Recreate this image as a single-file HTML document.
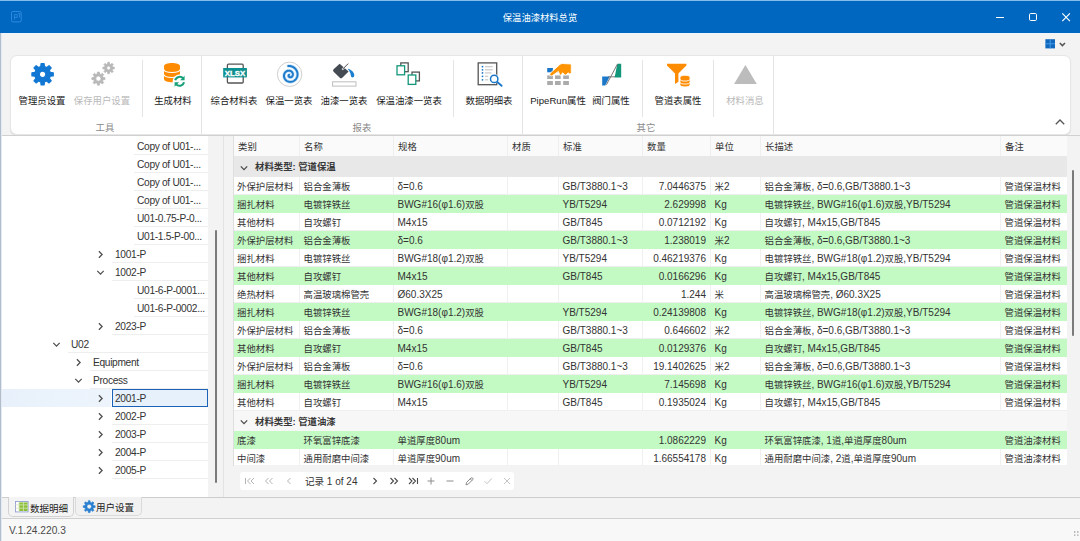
<!DOCTYPE html>
<html lang="zh-CN">
<head>
<meta charset="utf-8">
<title>保温油漆材料总览</title>
<style>
*{box-sizing:border-box;margin:0;padding:0}
html,body{width:1080px;height:541px;overflow:hidden;background:#f3f3f3}
body{position:relative;font-family:"Liberation Sans","Noto Sans CJK SC",sans-serif;font-size:9.4px;color:#333}
.abs,.abs *{position:absolute}
.abs span{position:static}
#title{left:0;top:0;width:1080px;height:33px;background:#0067c0;border-top:1px solid #86bcec}
#title .cap{left:0;width:1080px;top:10px;text-align:center;color:#fff;font-size:9.3px;line-height:14px}
#ribbon{left:10px;top:55px;width:1061px;height:80px;background:#fff;border:1px solid #e6e6e6;border-radius:7px;box-shadow:0 1px 1px rgba(0,0,0,.10)}
.gsep{top:0;width:1px;height:78px;background:#e4e4e4}
.isep{top:4px;width:1px;height:57px;background:#e4e4e4}
.lbl{top:38px;width:120px;margin-left:-60px;text-align:center;font-size:9.4px;line-height:14px;color:#1a1a1a;white-space:nowrap}
.lbl.dis{color:#b9b9b9}
.lbl .l{font-size:9.6px}
.ico{top:5px;width:28px;height:28px;margin-left:-14px}
.glbl{top:65px;font-size:9.4px;line-height:14px;color:#8a8a8a;text-align:center;width:40px;margin-left:-20px}
#tree{left:2px;top:136px;width:206px;height:361px;background:#fff;overflow:hidden}
.tn{height:18px;line-height:20px;font-size:10.2px;letter-spacing:-0.32px;color:#333;border-bottom:1px solid #eeeeee;padding-left:3px;white-space:nowrap;right:0}
.tn.sel{border:1px solid #1a62b8;background:#e6f1fb;line-height:18px;padding-left:2px}
.band{left:0;height:18px;background:linear-gradient(90deg,#e8f1fb,#edf4fc)}
#grid{left:233px;top:136px;width:834px;height:329px;background:#f3f3f3;overflow:hidden}
.hdr{top:0;left:0;width:834px;height:20px;background:#fafafa}
.hc{top:0;height:20px;line-height:22px;padding-left:4px;border-left:1px solid #efefef;color:#333}
.grp{left:0;width:834px;height:21px;background:#e8e8e8;line-height:22px;font-weight:bold;color:#383838;padding-left:22px}
.row{left:0;width:834px;height:18px;background:#fff;border-bottom:1px solid #efefef}
.row.g{background:#c3fac3;border-bottom-color:#c3fac3}
.c{top:0;height:18px;line-height:19px;padding-left:3.5px;white-space:nowrap;overflow:hidden;border-left:1px solid #f0f0f0}
.row.g .c{border-left-color:#c3fac3}
.c.r{text-align:right;padding-right:4px;padding-left:0}
.l{font-size:10px}
</style>
</head>
<body>
<div id="title" class="abs"><div class="cap">保温油漆材料总览</div>
<svg style="left:9.6px;top:9.3px" width="14" height="14" viewBox="0 0 14 14"><rect x="1.5" y="1.5" width="9.7" height="10.4" rx="1.4" fill="none" stroke="#2e8ae0" stroke-width="1"/><path d="M4.4 9.6 V4.6 H7.2 M8 3.4 H9.6 V7.6 M4.4 7.4 H7.2 V4.6" stroke="#2e8ae0" fill="none" stroke-width="0.9"/></svg>
<svg style="left:994px;top:9px" width="80" height="14" viewBox="0 0 80 14"><path d="M2 7.5 H10" stroke="#fff" stroke-width="1"/><rect x="35.5" y="3.5" width="7" height="7" rx="1.2" fill="none" stroke="#fff" stroke-width="1"/><path d="M68.3 3.4 L75.9 11.2 M75.9 3.4 L68.3 11.2" stroke="#fff" stroke-width="1.15"/></svg>
</div>
<svg class="abs" style="left:1045px;top:38px" width="26" height="12" viewBox="0 0 26 12"><rect x="0.4" y="1.2" width="9.6" height="9.2" fill="#0f67be"/><path d="M5.2 1.2 V10.4 M0.4 5.8 H10" stroke="#4aa0ea" stroke-width="0.9"/><path d="M14.8 5 L17.4 7.6 L20 5" stroke="#555" fill="none" stroke-width="1.5"/></svg>
<div id="ribbon" class="abs">
<div class="gsep" style="left:190px"></div>
<div class="gsep" style="left:511px"></div>
<div class="gsep" style="left:762px"></div>
<div class="isep" style="left:131px"></div>
<div class="isep" style="left:442px"></div>
<div class="isep" style="left:631px"></div>
<div class="isep" style="left:702px"></div>
<div class="ico" style="left:31px"><svg width="28" height="28" viewBox="0 0 28 28"><path fill-rule="evenodd" fill="#1177d3" stroke="#1177d3" stroke-width="1.2" stroke-linejoin="round" d="M22.28 11.46 L25.29 11.78 L25.29 14.82 L22.28 15.14 L21.34 17.43 L23.24 19.78 L21.08 21.94 L18.73 20.04 L16.44 20.98 L16.12 23.99 L13.08 23.99 L12.76 20.98 L10.47 20.04 L8.12 21.94 L5.96 19.78 L7.86 17.43 L6.92 15.14 L3.91 14.82 L3.91 11.78 L6.92 11.46 L7.86 9.17 L5.96 6.82 L8.12 4.66 L10.47 6.56 L12.76 5.62 L13.08 2.61 L16.12 2.61 L16.44 5.62 L18.73 6.56 L21.08 4.66 L23.24 6.82 L21.34 9.17 Z M11.40 13.30 a3.20 3.20 0 1 0 6.40 0 a3.20 3.20 0 1 0 -6.40 0 Z"/></svg></div>
<div class="lbl" style="left:31px">管理员设置</div>
<div class="ico" style="left:91px"><svg width="28" height="28" viewBox="0 0 28 28"><path fill-rule="evenodd" fill="#b8b8b8" stroke="#b8b8b8" stroke-width="0.8" stroke-linejoin="round" d="M24.59 6.04 L26.34 6.18 L26.34 7.82 L24.59 7.96 L24.10 9.14 L25.24 10.48 L24.08 11.64 L22.74 10.50 L21.56 10.99 L21.42 12.74 L19.78 12.74 L19.64 10.99 L18.46 10.50 L17.12 11.64 L15.96 10.48 L17.10 9.14 L16.61 7.96 L14.86 7.82 L14.86 6.18 L16.61 6.04 L17.10 4.86 L15.96 3.52 L17.12 2.36 L18.46 3.50 L19.64 3.01 L19.78 1.26 L21.42 1.26 L21.56 3.01 L22.74 3.50 L24.08 2.36 L25.24 3.52 L24.10 4.86 Z M18.70 7.00 a1.90 1.90 0 1 0 3.80 0 a1.90 1.90 0 1 0 -3.80 0 Z"/><path fill-rule="evenodd" fill="#b8b8b8" stroke="#b8b8b8" stroke-width="0.8" stroke-linejoin="round" d="M15.07 16.48 L16.93 16.67 L16.93 18.53 L15.07 18.72 L14.49 20.11 L15.68 21.56 L14.36 22.88 L12.91 21.69 L11.52 22.27 L11.33 24.13 L9.47 24.13 L9.28 22.27 L7.89 21.69 L6.44 22.88 L5.12 21.56 L6.31 20.11 L5.73 18.72 L3.87 18.53 L3.87 16.67 L5.73 16.48 L6.31 15.09 L5.12 13.64 L6.44 12.32 L7.89 13.51 L9.28 12.93 L9.47 11.07 L11.33 11.07 L11.52 12.93 L12.91 13.51 L14.36 12.32 L15.68 13.64 L14.49 15.09 Z M7.80 17.60 a2.60 2.60 0 1 0 5.20 0 a2.60 2.60 0 1 0 -5.20 0 Z"/></svg></div>
<div class="lbl dis" style="left:91px">保存用户设置</div>
<div class="ico" style="left:162px"><svg width="28" height="28" viewBox="0 0 28 28"><path fill="#ff8c00" d="M5 5.2 C5 0.8 21 0.8 21 5.2 V18 C21 22.4 5 22.4 5 18 Z"/><path fill="none" stroke="#fff" stroke-width="1.1" d="M5 8.6 C5 12.4 21 12.4 21 8.6 M5 13.6 C5 17.4 21 17.4 21 13.6"/><circle cx="20.6" cy="20.3" r="6.9" fill="#fff"/><path fill="none" stroke="#17a07a" stroke-width="2" d="M16.2 19.3 A4.6 4.6 0 0 1 24.3 17.6 M25 21.3 A4.6 4.6 0 0 1 16.9 23"/><path fill="#17a07a" d="M25.6 14.8 V19.3 H21.1 Z M15.6 25.8 V21.3 H20.1 Z"/></svg></div>
<div class="lbl" style="left:162px">生成材料</div>
<div class="ico" style="left:223px"><svg width="28" height="28" viewBox="0 0 28 28"><rect x="7.4" y="3.2" width="15.8" height="18.8" rx="1" fill="#fff" stroke="#555" stroke-width="1.3"/><rect x="3.2" y="7" width="23.7" height="9.4" fill="#0e9090"/><text x="15.1" y="14.5" text-anchor="middle" font-family="Liberation Sans,sans-serif" font-weight="bold" font-size="7.8" fill="#fff" stroke="#fff" stroke-width="0.35" textLength="20.5" lengthAdjust="spacingAndGlyphs">XLSX</text></svg></div>
<div class="lbl" style="left:223px">综合材料表</div>
<div class="ico" style="left:278px"><svg width="28" height="28" viewBox="0 0 28 28"><circle cx="14.6" cy="13.3" r="12.2" fill="#fff" stroke="#cfcfcf" stroke-width="1"/><path fill="none" stroke="#cfe7fa" stroke-width="3.6" stroke-linecap="round" d="M13.23 5.00 L14.12 4.99 L15.00 5.05 L15.86 5.21 L16.70 5.44 L17.50 5.75 L18.26 6.14 L18.98 6.59 L19.64 7.11 L20.25 7.68 L20.79 8.31 L21.26 8.98 L21.66 9.69 L21.99 10.42 L22.25 11.18 L22.42 11.95 L22.52 12.73 L22.55 13.51 L22.49 14.28 L22.37 15.03 L22.17 15.76 L21.90 16.47 L21.57 17.13 L21.18 17.76 L20.74 18.34 L20.25 18.86 L19.71 19.34 L19.13 19.75 L18.53 20.10 L17.89 20.39 L17.24 20.61 L16.58 20.76 L15.91 20.85 L15.25 20.88 L14.59 20.83 L13.94 20.73 L13.32 20.56 L12.72 20.34 L12.15 20.06 L11.62 19.73 L11.13 19.36 L10.68 18.94 L10.29 18.49 L9.94 18.01 L9.64 17.49 L9.40 16.96 L9.21 16.42 L9.08 15.87 L9.01 15.31 L8.99 14.75 L9.03 14.21 L9.11 13.67 L9.25 13.16 L9.44 12.66 L9.67 12.20 L9.94 11.76 L10.25 11.36 L10.59 11.00 L10.97 10.67 L11.36 10.39 L11.78 10.16 L12.21 9.96 L12.65 9.82 L13.10 9.72 L13.54 9.66 L13.99 9.65 L14.42 9.69 L14.85 9.76 L15.25 9.88 L15.64 10.03 L16.00 10.22 L16.34 10.44 L16.65 10.69 L16.93 10.96 L17.17 11.25 L17.38 11.57 L17.55 11.89 L17.69 12.22 L17.79 12.56 L17.86 12.90 L17.89 13.24 L17.89 13.58 L17.85 13.90 L17.78 14.21 L17.68 14.51 L17.56 14.79 L17.41 15.05 L17.24 15.29 L17.05 15.50 L16.84 15.69 L16.62 15.85 L16.39 15.99 L16.16 16.09 L15.92 16.17 L15.68 16.23 L15.44 16.25 L15.21 16.26 L14.99 16.23 L14.77 16.19 L14.57 16.12 L14.38 16.04 L14.21 15.94 L14.06 15.82 L13.92 15.69 L13.81 15.56 L13.71 15.41 L13.63 15.27 L13.58 15.12 L13.54 14.97 L13.52 14.82 L13.52 14.68 L13.54 14.54 L13.57 14.42 L13.61 14.30 L13.67 14.20 L13.74 14.11 L13.81 14.03 L13.90 13.97 L13.98 13.92 L14.07 13.89 L14.16 13.87"/><path fill="none" stroke="#1f7ccb" stroke-width="2" stroke-linecap="round" d="M13.23 5.00 L14.12 4.99 L15.00 5.05 L15.86 5.21 L16.70 5.44 L17.50 5.75 L18.26 6.14 L18.98 6.59 L19.64 7.11 L20.25 7.68 L20.79 8.31 L21.26 8.98 L21.66 9.69 L21.99 10.42 L22.25 11.18 L22.42 11.95 L22.52 12.73 L22.55 13.51 L22.49 14.28 L22.37 15.03 L22.17 15.76 L21.90 16.47 L21.57 17.13 L21.18 17.76 L20.74 18.34 L20.25 18.86 L19.71 19.34 L19.13 19.75 L18.53 20.10 L17.89 20.39 L17.24 20.61 L16.58 20.76 L15.91 20.85 L15.25 20.88 L14.59 20.83 L13.94 20.73 L13.32 20.56 L12.72 20.34 L12.15 20.06 L11.62 19.73 L11.13 19.36 L10.68 18.94 L10.29 18.49 L9.94 18.01 L9.64 17.49 L9.40 16.96 L9.21 16.42 L9.08 15.87 L9.01 15.31 L8.99 14.75 L9.03 14.21 L9.11 13.67 L9.25 13.16 L9.44 12.66 L9.67 12.20 L9.94 11.76 L10.25 11.36 L10.59 11.00 L10.97 10.67 L11.36 10.39 L11.78 10.16 L12.21 9.96 L12.65 9.82 L13.10 9.72 L13.54 9.66 L13.99 9.65 L14.42 9.69 L14.85 9.76 L15.25 9.88 L15.64 10.03 L16.00 10.22 L16.34 10.44 L16.65 10.69 L16.93 10.96 L17.17 11.25 L17.38 11.57 L17.55 11.89 L17.69 12.22 L17.79 12.56 L17.86 12.90 L17.89 13.24 L17.89 13.58 L17.85 13.90 L17.78 14.21 L17.68 14.51 L17.56 14.79 L17.41 15.05 L17.24 15.29 L17.05 15.50 L16.84 15.69 L16.62 15.85 L16.39 15.99 L16.16 16.09 L15.92 16.17 L15.68 16.23 L15.44 16.25 L15.21 16.26 L14.99 16.23 L14.77 16.19 L14.57 16.12 L14.38 16.04 L14.21 15.94 L14.06 15.82 L13.92 15.69 L13.81 15.56 L13.71 15.41 L13.63 15.27 L13.58 15.12 L13.54 14.97 L13.52 14.82 L13.52 14.68 L13.54 14.54 L13.57 14.42 L13.61 14.30 L13.67 14.20 L13.74 14.11 L13.81 14.03 L13.90 13.97 L13.98 13.92 L14.07 13.89 L14.16 13.87"/></svg></div>
<div class="lbl" style="left:278px">保温一览表</div>
<div class="ico" style="left:333px"><svg width="28" height="28" viewBox="0 0 28 28"><path fill="#454b52" d="M9.6 2.8 L18.6 10.6 L12 17 Q10.8 17.8 9.8 16.8 L3.4 10.4 Q2.6 9.2 3.6 8.2 Z"/><path stroke="#fff" stroke-width="1.6" d="M17.6 3.2 L12.2 8.6"/><path stroke="#454b52" stroke-width="1" d="M18.2 2.6 L12.6 8.2"/><path fill="#1b7fd0" d="M17.6 7.8 C21.5 8.4 24.4 11.6 24.3 14.6 C24.2 17 21.2 17.2 20.9 14.8 C20.6 12.2 19.8 10.2 17.6 7.8 Z"/><rect x="2.6" y="20.8" width="23.4" height="4.3" fill="#fff" stroke="#bdbdbd" stroke-width="1"/></svg></div>
<div class="lbl" style="left:333px">油漆一览表</div>
<div class="ico" style="left:398px"><svg width="28" height="28" viewBox="0 0 28 28"><rect x="5.8" y="1.9" width="7.4" height="8.8" fill="#fff" stroke="#555" stroke-width="1.3"/><rect x="2" y="4.8" width="7.6" height="9" fill="#fff" stroke="#12977a" stroke-width="1.3"/><rect x="17" y="11.1" width="7.4" height="8.8" fill="#fff" stroke="#555" stroke-width="1.3"/><rect x="13.2" y="14" width="7.6" height="9.4" fill="#fff" stroke="#12977a" stroke-width="1.3"/></svg></div>
<div class="lbl" style="left:398px">保温油漆一览表</div>
<div class="ico" style="left:478px"><svg width="28" height="28" viewBox="0 0 28 28"><rect x="3.2" y="1.9" width="18.5" height="21.8" fill="#fff" stroke="#555" stroke-width="1.3"/><circle cx="7.5" cy="5.7" r="0.9" fill="#1b78c8"/><circle cx="7.5" cy="8.8" r="0.9" fill="#1b78c8"/><circle cx="7.5" cy="11.9" r="0.9" fill="#1b78c8"/><circle cx="7.5" cy="15.3" r="0.9" fill="#1b78c8"/><circle cx="7.5" cy="18.8" r="0.9" fill="#1b78c8"/><path d="M10 5.7 H17.7" stroke="#c4c4c4" stroke-width="1.1"/><path d="M10 8.8 H17.7" stroke="#c4c4c4" stroke-width="1.1"/><path d="M10 11.9 H16.5" stroke="#c4c4c4" stroke-width="1.1"/><path d="M10 15.3 H13.2" stroke="#c4c4c4" stroke-width="1.1"/><path d="M10 18.8 H13.2" stroke="#c4c4c4" stroke-width="1.1"/><circle cx="19.2" cy="17.9" r="4.9" fill="#fff"/><path d="M22 20.8 L26.6 24.8" stroke="#1b78c8" stroke-width="1.9" stroke-linecap="round"/><circle cx="19.2" cy="17.9" r="3.7" fill="#fff" stroke="#1b78c8" stroke-width="1.5"/></svg></div>
<div class="lbl" style="left:478px">数据明细表</div>
<div class="ico" style="left:547px"><svg width="28" height="28" viewBox="0 0 28 28"><rect x="3.2" y="7.0" width="5.7" height="4.3" fill="#1b78c8"/><rect x="11.0" y="7.0" width="5.7" height="4.3" fill="#ababab"/><rect x="19.2" y="7.0" width="5.7" height="4.3" fill="#ababab"/><rect x="3.2" y="14.4" width="5.7" height="3.6" fill="#ababab"/><rect x="11.0" y="14.4" width="5.7" height="3.6" fill="#ababab"/><rect x="19.2" y="14.4" width="5.7" height="3.6" fill="#ababab"/><rect x="3.2" y="20.0" width="5.7" height="4.0" fill="#ababab"/><rect x="11.0" y="20.0" width="5.7" height="4.0" fill="#ababab"/><rect x="19.2" y="20.0" width="5.7" height="4.0" fill="#ababab"/><path fill="#ff9300" stroke="#fff" stroke-width="0.9" stroke-linejoin="round" d="M27.3 3 L18.4 2.5 Q17 2.5 15.8 3.5 L6.2 12.2 Q5.2 13.6 6.2 14.6 Q7.2 15.3 8.6 14.4 L14.4 10.4 L15.4 13.2 Q16.6 15 17.8 13.2 L18.6 11.8 L20.4 13.4 Q21.7 14.9 23 13.2 L24 11.8 L25.2 12.8 Q26.4 13.4 27.3 11.6 Z"/></svg></div>
<div class="lbl" style="left:547px"><span class="l">PipeRun</span>属性</div>
<div class="ico" style="left:600px"><svg width="28" height="28" viewBox="0 0 28 28"><path fill="#1b78c8" d="M5.2 15.4 H12.8 L8.2 24.4 H5.2 Z"/><path fill="#12977a" d="M20.3 2.7 H24.2 V16.4 H17.6 Z"/><path fill="none" stroke="#777" stroke-width="1" d="M9.4 23.8 L20.5 3 M11 15.8 H18"/></svg></div>
<div class="lbl" style="left:600px">阀门属性</div>
<div class="ico" style="left:667px"><svg width="28" height="28" viewBox="0 0 28 28"><path fill="#ff8c00" d="M3 2.8 H22.4 V4.4 L14.4 12.4 V20.8 L11 23 V12.4 L3 4.4 Z"/><path fill="#ff8c00" stroke="#fff" stroke-width="0.8" d="M16 16.4 C16 13.6 26 13.6 26 16.4 V23.8 C26 26.6 16 26.6 16 23.8 Z"/><path fill="none" stroke="#fff" stroke-width="0.9" d="M16 18.4 C16 20.6 26 20.6 26 18.4 M16 21.4 C16 23.6 26 23.6 26 21.4"/></svg></div>
<div class="lbl" style="left:667px">管道表属性</div>
<div class="ico" style="left:734px"><svg width="28" height="28" viewBox="0 0 28 28"><path fill="#bcbcbc" d="M14.4 4.1 L25.8 22.9 H3.1 Z"/></svg></div>
<div class="lbl dis" style="left:734px">材料消息</div>
<div class="glbl" style="left:94px">工具</div>
<div class="glbl" style="left:351px">报表</div>
<div class="glbl" style="left:635px">其它</div>
<svg style="left:1042.7px;top:61.8px" width="12" height="8" viewBox="0 0 12 8"><path d="M1.8 6.2 L6 2 L10.2 6.2" stroke="#555" fill="none" stroke-width="1.3"/></svg>
</div>
<div class="abs" style="left:2px;top:135px;width:1078px;height:1px;background:#d0d0d0"></div>
<div id="tree" class="abs">
<div class="tn" style="left:132px;top:1px">Copy of U01-...</div>
<div class="tn" style="left:132px;top:19px">Copy of U01-...</div>
<div class="tn" style="left:132px;top:37px">Copy of U01-...</div>
<div class="tn" style="left:132px;top:55px">Copy of U01-...</div>
<div class="tn" style="left:132px;top:73px">U01-0.75-P-0...</div>
<div class="tn" style="left:132px;top:91px">U01-1.5-P-00...</div>
<div class="tn" style="left:110px;top:109px">1001-P</div>
<svg style="left:94px;top:113.5px" width="9" height="9" viewBox="0 0 9 9"><path d="M2.9 1.3 L6.1 4.5 L2.9 7.7" stroke="#505050" fill="none" stroke-width="1.3"/></svg>
<div class="tn" style="left:110px;top:127px">1002-P</div>
<svg style="left:94px;top:131.5px" width="9" height="9" viewBox="0 0 9 9"><path d="M1.3 2.9 L4.5 6.1 L7.7 2.9" stroke="#505050" fill="none" stroke-width="1.3"/></svg>
<div class="tn" style="left:132px;top:145px">U01-6-P-0001...</div>
<div class="tn" style="left:132px;top:163px">U01-6-P-0002...</div>
<div class="tn" style="left:110px;top:181px">2023-P</div>
<svg style="left:94px;top:185.5px" width="9" height="9" viewBox="0 0 9 9"><path d="M2.9 1.3 L6.1 4.5 L2.9 7.7" stroke="#505050" fill="none" stroke-width="1.3"/></svg>
<div class="tn" style="left:66px;top:199px">U02</div>
<svg style="left:50px;top:203.5px" width="9" height="9" viewBox="0 0 9 9"><path d="M1.3 2.9 L4.5 6.1 L7.7 2.9" stroke="#505050" fill="none" stroke-width="1.3"/></svg>
<div class="tn" style="left:88px;top:217px">Equipment</div>
<svg style="left:72px;top:221.5px" width="9" height="9" viewBox="0 0 9 9"><path d="M2.9 1.3 L6.1 4.5 L2.9 7.7" stroke="#505050" fill="none" stroke-width="1.3"/></svg>
<div class="tn" style="left:88px;top:235px">Process</div>
<svg style="left:72px;top:239.5px" width="9" height="9" viewBox="0 0 9 9"><path d="M1.3 2.9 L4.5 6.1 L7.7 2.9" stroke="#505050" fill="none" stroke-width="1.3"/></svg>
<div class="band" style="top:253px;width:109px"></div>
<div class="tn sel" style="left:110px;top:253px">2001-P</div>
<svg style="left:94px;top:257.5px" width="9" height="9" viewBox="0 0 9 9"><path d="M2.9 1.3 L6.1 4.5 L2.9 7.7" stroke="#505050" fill="none" stroke-width="1.3"/></svg>
<div class="tn" style="left:110px;top:271px">2002-P</div>
<svg style="left:94px;top:275.5px" width="9" height="9" viewBox="0 0 9 9"><path d="M2.9 1.3 L6.1 4.5 L2.9 7.7" stroke="#505050" fill="none" stroke-width="1.3"/></svg>
<div class="tn" style="left:110px;top:289px">2003-P</div>
<svg style="left:94px;top:293.5px" width="9" height="9" viewBox="0 0 9 9"><path d="M2.9 1.3 L6.1 4.5 L2.9 7.7" stroke="#505050" fill="none" stroke-width="1.3"/></svg>
<div class="tn" style="left:110px;top:307px">2004-P</div>
<svg style="left:94px;top:311.5px" width="9" height="9" viewBox="0 0 9 9"><path d="M2.9 1.3 L6.1 4.5 L2.9 7.7" stroke="#505050" fill="none" stroke-width="1.3"/></svg>
<div class="tn" style="left:110px;top:325px">2005-P</div>
<svg style="left:94px;top:329.5px" width="9" height="9" viewBox="0 0 9 9"><path d="M2.9 1.3 L6.1 4.5 L2.9 7.7" stroke="#505050" fill="none" stroke-width="1.3"/></svg>
</div>
<div class="abs" style="left:208px;top:136px;width:15px;height:361px;background:#f3f3f3"><div style="left:7px;top:94px;width:2px;height:253px;background:#7a7a7a;border-radius:1px"></div></div>
<div class="abs" style="left:223px;top:136px;width:1px;height:361px;background:#e3e3e3"></div>
<div id="grid" class="abs">
<div class="hdr">
<div class="hc" style="left:0px;width:66px;border-left:0;padding-left:5px">类别</div>
<div class="hc" style="left:66px;width:94px">名称</div>
<div class="hc" style="left:160px;width:114px">规格</div>
<div class="hc" style="left:274px;width:51px">材质</div>
<div class="hc" style="left:325px;width:84px">标准</div>
<div class="hc" style="left:409px;width:68px">数量</div>
<div class="hc" style="left:477px;width:50px">单位</div>
<div class="hc" style="left:527px;width:240px">长描述</div>
<div class="hc" style="left:767px;width:67px">备注</div>
</div>
<div class="grp" style="top:20px"><svg style="left:6px;top:7.5px" width="10" height="8" viewBox="0 0 10 8"><path d="M1.8 2.4 L5 5.6 L8.2 2.4" stroke="#4a4a4a" fill="none" stroke-width="1.3"/></svg>材料类型: 管道保温</div>
<div class="row" style="top:41px">
<div class="c" style="left:0px;width:66px;border-left:0;padding-left:4px">外保护层材料</div>
<div class="c" style="left:66px;width:94px">铝合金薄板</div>
<div class="c" style="left:160px;width:114px"><span class="l">δ=0.6</span></div>
<div class="c" style="left:274px;width:51px"></div>
<div class="c" style="left:325px;width:84px"><span class="l">GB/T3880.1~3</span></div>
<div class="c r" style="left:409px;width:68px"><span class="l">7.0446375</span></div>
<div class="c" style="left:477px;width:50px">米<span class="l">2</span></div>
<div class="c" style="left:527px;width:240px">铝合金薄板<span class="l">, δ=0.6,GB/T3880.1~3</span></div>
<div class="c" style="left:767px;width:67px">管道保温材料</div>
</div>
<div class="row g" style="top:59px">
<div class="c" style="left:0px;width:66px;border-left:0;padding-left:4px">捆扎材料</div>
<div class="c" style="left:66px;width:94px">电镀锌铁丝</div>
<div class="c" style="left:160px;width:114px"><span class="l">BWG#16(φ1.6)</span>双股</div>
<div class="c" style="left:274px;width:51px"></div>
<div class="c" style="left:325px;width:84px"><span class="l">YB/T5294</span></div>
<div class="c r" style="left:409px;width:68px"><span class="l">2.629998</span></div>
<div class="c" style="left:477px;width:50px"><span class="l">Kg</span></div>
<div class="c" style="left:527px;width:240px">电镀锌铁丝<span class="l">, BWG#16(φ1.6)</span>双股<span class="l">,YB/T5294</span></div>
<div class="c" style="left:767px;width:67px">管道保温材料</div>
</div>
<div class="row" style="top:77px">
<div class="c" style="left:0px;width:66px;border-left:0;padding-left:4px">其他材料</div>
<div class="c" style="left:66px;width:94px">自攻螺钉</div>
<div class="c" style="left:160px;width:114px"><span class="l">M4x15</span></div>
<div class="c" style="left:274px;width:51px"></div>
<div class="c" style="left:325px;width:84px"><span class="l">GB/T845</span></div>
<div class="c r" style="left:409px;width:68px"><span class="l">0.0712192</span></div>
<div class="c" style="left:477px;width:50px"><span class="l">Kg</span></div>
<div class="c" style="left:527px;width:240px">自攻螺钉<span class="l">, M4x15,GB/T845</span></div>
<div class="c" style="left:767px;width:67px">管道保温材料</div>
</div>
<div class="row g" style="top:95px">
<div class="c" style="left:0px;width:66px;border-left:0;padding-left:4px">外保护层材料</div>
<div class="c" style="left:66px;width:94px">铝合金薄板</div>
<div class="c" style="left:160px;width:114px"><span class="l">δ=0.6</span></div>
<div class="c" style="left:274px;width:51px"></div>
<div class="c" style="left:325px;width:84px"><span class="l">GB/T3880.1~3</span></div>
<div class="c r" style="left:409px;width:68px"><span class="l">1.238019</span></div>
<div class="c" style="left:477px;width:50px">米<span class="l">2</span></div>
<div class="c" style="left:527px;width:240px">铝合金薄板<span class="l">, δ=0.6,GB/T3880.1~3</span></div>
<div class="c" style="left:767px;width:67px">管道保温材料</div>
</div>
<div class="row" style="top:113px">
<div class="c" style="left:0px;width:66px;border-left:0;padding-left:4px">捆扎材料</div>
<div class="c" style="left:66px;width:94px">电镀锌铁丝</div>
<div class="c" style="left:160px;width:114px"><span class="l">BWG#18(φ1.2)</span>双股</div>
<div class="c" style="left:274px;width:51px"></div>
<div class="c" style="left:325px;width:84px"><span class="l">YB/T5294</span></div>
<div class="c r" style="left:409px;width:68px"><span class="l">0.46219376</span></div>
<div class="c" style="left:477px;width:50px"><span class="l">Kg</span></div>
<div class="c" style="left:527px;width:240px">电镀锌铁丝<span class="l">, BWG#18(φ1.2)</span>双股<span class="l">,YB/T5294</span></div>
<div class="c" style="left:767px;width:67px">管道保温材料</div>
</div>
<div class="row g" style="top:131px">
<div class="c" style="left:0px;width:66px;border-left:0;padding-left:4px">其他材料</div>
<div class="c" style="left:66px;width:94px">自攻螺钉</div>
<div class="c" style="left:160px;width:114px"><span class="l">M4x15</span></div>
<div class="c" style="left:274px;width:51px"></div>
<div class="c" style="left:325px;width:84px"><span class="l">GB/T845</span></div>
<div class="c r" style="left:409px;width:68px"><span class="l">0.0166296</span></div>
<div class="c" style="left:477px;width:50px"><span class="l">Kg</span></div>
<div class="c" style="left:527px;width:240px">自攻螺钉<span class="l">, M4x15,GB/T845</span></div>
<div class="c" style="left:767px;width:67px">管道保温材料</div>
</div>
<div class="row" style="top:149px">
<div class="c" style="left:0px;width:66px;border-left:0;padding-left:4px">绝热材料</div>
<div class="c" style="left:66px;width:94px">高温玻璃棉管壳</div>
<div class="c" style="left:160px;width:114px"><span class="l">Ø60.3X25</span></div>
<div class="c" style="left:274px;width:51px"></div>
<div class="c" style="left:325px;width:84px"></div>
<div class="c r" style="left:409px;width:68px"><span class="l">1.244</span></div>
<div class="c" style="left:477px;width:50px">米</div>
<div class="c" style="left:527px;width:240px">高温玻璃棉管壳<span class="l">, Ø60.3X25</span></div>
<div class="c" style="left:767px;width:67px">管道保温材料</div>
</div>
<div class="row g" style="top:167px">
<div class="c" style="left:0px;width:66px;border-left:0;padding-left:4px">捆扎材料</div>
<div class="c" style="left:66px;width:94px">电镀锌铁丝</div>
<div class="c" style="left:160px;width:114px"><span class="l">BWG#18(φ1.2)</span>双股</div>
<div class="c" style="left:274px;width:51px"></div>
<div class="c" style="left:325px;width:84px"><span class="l">YB/T5294</span></div>
<div class="c r" style="left:409px;width:68px"><span class="l">0.24139808</span></div>
<div class="c" style="left:477px;width:50px"><span class="l">Kg</span></div>
<div class="c" style="left:527px;width:240px">电镀锌铁丝<span class="l">, BWG#18(φ1.2)</span>双股<span class="l">,YB/T5294</span></div>
<div class="c" style="left:767px;width:67px">管道保温材料</div>
</div>
<div class="row" style="top:185px">
<div class="c" style="left:0px;width:66px;border-left:0;padding-left:4px">外保护层材料</div>
<div class="c" style="left:66px;width:94px">铝合金薄板</div>
<div class="c" style="left:160px;width:114px"><span class="l">δ=0.6</span></div>
<div class="c" style="left:274px;width:51px"></div>
<div class="c" style="left:325px;width:84px"><span class="l">GB/T3880.1~3</span></div>
<div class="c r" style="left:409px;width:68px"><span class="l">0.646602</span></div>
<div class="c" style="left:477px;width:50px">米<span class="l">2</span></div>
<div class="c" style="left:527px;width:240px">铝合金薄板<span class="l">, δ=0.6,GB/T3880.1~3</span></div>
<div class="c" style="left:767px;width:67px">管道保温材料</div>
</div>
<div class="row g" style="top:203px">
<div class="c" style="left:0px;width:66px;border-left:0;padding-left:4px">其他材料</div>
<div class="c" style="left:66px;width:94px">自攻螺钉</div>
<div class="c" style="left:160px;width:114px"><span class="l">M4x15</span></div>
<div class="c" style="left:274px;width:51px"></div>
<div class="c" style="left:325px;width:84px"><span class="l">GB/T845</span></div>
<div class="c r" style="left:409px;width:68px"><span class="l">0.0129376</span></div>
<div class="c" style="left:477px;width:50px"><span class="l">Kg</span></div>
<div class="c" style="left:527px;width:240px">自攻螺钉<span class="l">, M4x15,GB/T845</span></div>
<div class="c" style="left:767px;width:67px">管道保温材料</div>
</div>
<div class="row" style="top:221px">
<div class="c" style="left:0px;width:66px;border-left:0;padding-left:4px">外保护层材料</div>
<div class="c" style="left:66px;width:94px">铝合金薄板</div>
<div class="c" style="left:160px;width:114px"><span class="l">δ=0.6</span></div>
<div class="c" style="left:274px;width:51px"></div>
<div class="c" style="left:325px;width:84px"><span class="l">GB/T3880.1~3</span></div>
<div class="c r" style="left:409px;width:68px"><span class="l">19.1402625</span></div>
<div class="c" style="left:477px;width:50px">米<span class="l">2</span></div>
<div class="c" style="left:527px;width:240px">铝合金薄板<span class="l">, δ=0.6,GB/T3880.1~3</span></div>
<div class="c" style="left:767px;width:67px">管道保温材料</div>
</div>
<div class="row g" style="top:239px">
<div class="c" style="left:0px;width:66px;border-left:0;padding-left:4px">捆扎材料</div>
<div class="c" style="left:66px;width:94px">电镀锌铁丝</div>
<div class="c" style="left:160px;width:114px"><span class="l">BWG#16(φ1.6)</span>双股</div>
<div class="c" style="left:274px;width:51px"></div>
<div class="c" style="left:325px;width:84px"><span class="l">YB/T5294</span></div>
<div class="c r" style="left:409px;width:68px"><span class="l">7.145698</span></div>
<div class="c" style="left:477px;width:50px"><span class="l">Kg</span></div>
<div class="c" style="left:527px;width:240px">电镀锌铁丝<span class="l">, BWG#16(φ1.6)</span>双股<span class="l">,YB/T5294</span></div>
<div class="c" style="left:767px;width:67px">管道保温材料</div>
</div>
<div class="row" style="top:257px">
<div class="c" style="left:0px;width:66px;border-left:0;padding-left:4px">其他材料</div>
<div class="c" style="left:66px;width:94px">自攻螺钉</div>
<div class="c" style="left:160px;width:114px"><span class="l">M4x15</span></div>
<div class="c" style="left:274px;width:51px"></div>
<div class="c" style="left:325px;width:84px"><span class="l">GB/T845</span></div>
<div class="c r" style="left:409px;width:68px"><span class="l">0.1935024</span></div>
<div class="c" style="left:477px;width:50px"><span class="l">Kg</span></div>
<div class="c" style="left:527px;width:240px">自攻螺钉<span class="l">, M4x15,GB/T845</span></div>
<div class="c" style="left:767px;width:67px">管道保温材料</div>
</div>
<div class="grp" style="top:275px;background:#f7f7f7;height:20px;line-height:21px"><svg style="left:6px;top:6.5px" width="10" height="8" viewBox="0 0 10 8"><path d="M1.8 2.4 L5 5.6 L8.2 2.4" stroke="#4a4a4a" fill="none" stroke-width="1.3"/></svg>材料类型: 管道油漆</div>
<div class="row g" style="top:295px">
<div class="c" style="left:0px;width:66px;border-left:0;padding-left:4px">底漆</div>
<div class="c" style="left:66px;width:94px">环氧富锌底漆</div>
<div class="c" style="left:160px;width:114px">单道厚度<span class="l">80um</span></div>
<div class="c" style="left:274px;width:51px"></div>
<div class="c" style="left:325px;width:84px"></div>
<div class="c r" style="left:409px;width:68px"><span class="l">1.0862229</span></div>
<div class="c" style="left:477px;width:50px"><span class="l">Kg</span></div>
<div class="c" style="left:527px;width:240px">环氧富锌底漆<span class="l">, 1</span>道<span class="l">,</span>单道厚度<span class="l">80um</span></div>
<div class="c" style="left:767px;width:67px">管道油漆材料</div>
</div>
<div class="row" style="top:313px">
<div class="c" style="left:0px;width:66px;border-left:0;padding-left:4px">中间漆</div>
<div class="c" style="left:66px;width:94px">通用耐磨中间漆</div>
<div class="c" style="left:160px;width:114px">单道厚度<span class="l">90um</span></div>
<div class="c" style="left:274px;width:51px"></div>
<div class="c" style="left:325px;width:84px"></div>
<div class="c r" style="left:409px;width:68px"><span class="l">1.66554178</span></div>
<div class="c" style="left:477px;width:50px"><span class="l">Kg</span></div>
<div class="c" style="left:527px;width:240px">通用耐磨中间漆<span class="l">, 2</span>道<span class="l">,</span>单道厚度<span class="l">90um</span></div>
<div class="c" style="left:767px;width:67px">管道油漆材料</div>
</div>
</div>
<div class="abs" style="left:233px;top:136px;width:1px;height:330px;background:#dedede"></div>
<div class="abs" style="left:1072px;top:170px;width:2px;height:166px;background:#7a7a7a;border-radius:1px"></div>
<div class="abs" id="nav" style="left:240px;top:472px;width:274px;height:18px;background:#fff;border-radius:3px">
<div style="left:65px;top:0;line-height:20px;font-size:9.6px;white-space:nowrap">记录 <span class="l">1 of 24</span></div>
<svg style="left:2.7px;top:2.7px" width="14" height="12" viewBox="0 0 14 12"><path d="M2.5 3 V9 M7.5 3 L4.5 6 L7.5 9 M11 3 L8 6 L11 9" stroke="#b4b4b4" fill="none" stroke-width="1"/></svg>
<svg style="left:22.2px;top:2.7px" width="14" height="12" viewBox="0 0 14 12"><path d="M6.5 3 L3.5 6 L6.5 9 M10.5 3 L7.5 6 L10.5 9" stroke="#b4b4b4" fill="none" stroke-width="1"/></svg>
<svg style="left:41.6px;top:2.7px" width="14" height="12" viewBox="0 0 14 12"><path d="M8.5 3 L5.5 6 L8.5 9" stroke="#b4b4b4" fill="none" stroke-width="1"/></svg>
<svg style="left:128.3px;top:2.7px" width="14" height="12" viewBox="0 0 14 12"><path d="M5.5 3 L8.5 6 L5.5 9" stroke="#4a4a4a" fill="none" stroke-width="1.1"/></svg>
<svg style="left:146.9px;top:2.7px" width="14" height="12" viewBox="0 0 14 12"><path d="M3.5 3 L6.5 6 L3.5 9 M7.5 3 L10.5 6 L7.5 9" stroke="#4a4a4a" fill="none" stroke-width="1.1"/></svg>
<svg style="left:165.8px;top:2.7px" width="14" height="12" viewBox="0 0 14 12"><path d="M3 3 L6 6 L3 9 M6.5 3 L9.5 6 L6.5 9 M11.5 3 V9" stroke="#4a4a4a" fill="none" stroke-width="1.1"/></svg>
<svg style="left:184.4px;top:2.7px" width="14" height="12" viewBox="0 0 14 12"><path d="M3.5 6 H10.5 M7 2.5 V9.5" stroke="#8c8c8c" fill="none" stroke-width="1"/></svg>
<svg style="left:203.3px;top:2.7px" width="14" height="12" viewBox="0 0 14 12"><path d="M3.5 6 H10.5" stroke="#8c8c8c" fill="none" stroke-width="1"/></svg>
<svg style="left:222.2px;top:2.7px" width="14" height="12" viewBox="0 0 14 12"><path d="M4 9.8 L4.6 7.4 L9 3 Q9.9 2.3 10.7 3.1 Q11.4 3.9 10.7 4.7 L6.3 9.1 Z M8.2 3.8 L9.9 5.5" stroke="#8c8c8c" fill="none" stroke-width="1"/></svg>
<svg style="left:240.8px;top:2.7px" width="14" height="12" viewBox="0 0 14 12"><path d="M3.5 6.2 L6 8.7 L10.8 3.4" stroke="#c4c4c4" fill="none" stroke-width="1"/></svg>
<svg style="left:260.2px;top:2.7px" width="14" height="12" viewBox="0 0 14 12"><path d="M4 3 L10 9 M10 3 L4 9" stroke="#c4c4c4" fill="none" stroke-width="1"/></svg>
</div>
<div class="abs" style="left:0;top:497px;width:1080px;height:1px;background:#cdcdcd"></div>
<div class="abs" style="left:8px;top:497px;width:66px;height:20px;border:1px solid #d2d2d2;border-top:0;border-radius:0 0 5px 5px;background:#f4f4f4"><svg style="left:6px;top:4px" width="14" height="12" viewBox="0 0 14 12"><rect x="0.5" y="0.5" width="12.6" height="10.4" fill="#fff" stroke="#9aa6d6" stroke-width="1"/><rect x="4" y="1.4" width="8.6" height="8.6" fill="#8cc03c"/><path d="M0.5 3.9 H13 M0.5 7.2 H13 M4 0.5 V11 M8.4 1 V10.5" stroke="#d7e6b8" stroke-width="0.8" fill="none"/></svg><div style="left:21px;top:0;line-height:23px;font-size:9.5px;white-space:nowrap;color:#222">数据明细</div></div>
<div class="abs" style="left:75px;top:497px;width:67px;height:19px;border:1px solid #dadada;border-top:0;border-radius:0 0 5px 5px;background:#f1f1f1"><svg style="left:6px;top:3px" width="14" height="14" viewBox="0 0 14 14"><path fill-rule="evenodd" fill="#2a7fd0" stroke="#2a7fd0" stroke-width="0.6" stroke-linejoin="round" d="M11.48 5.57 L13.14 5.75 L13.14 7.45 L11.48 7.63 L10.95 8.90 L12.00 10.20 L10.80 11.40 L9.50 10.35 L8.23 10.88 L8.05 12.54 L6.35 12.54 L6.17 10.88 L4.90 10.35 L3.60 11.40 L2.40 10.20 L3.45 8.90 L2.92 7.63 L1.26 7.45 L1.26 5.75 L2.92 5.57 L3.45 4.30 L2.40 3.00 L3.60 1.80 L4.90 2.85 L6.17 2.32 L6.35 0.66 L8.05 0.66 L8.23 2.32 L9.50 2.85 L10.80 1.80 L12.00 3.00 L10.95 4.30 Z M4.90 6.60 a2.30 2.30 0 1 0 4.60 0 a2.30 2.30 0 1 0 -4.60 0 Z"/></svg><div style="left:20px;top:0;line-height:21px;font-size:9.5px;white-space:nowrap;color:#222">用户设置</div></div>
<div class="abs" style="left:0;top:518px;width:1080px;height:23px;background:#f8f8f8;border-top:1px solid #d0d0d0"><div style="left:9px;top:0;line-height:23px;font-size:10.2px;color:#4a4a4a;white-space:nowrap">V.1.24.220.3</div></div>
<svg class="abs" style="left:1073px;top:530px" width="7" height="7" viewBox="0 0 7 7"><path d="M1 1.3h1.4v1.4h-1.4z M4.1 1.3h1.4v1.4h-1.4z M1 4.4h1.4v1.4h-1.4z M4.1 4.4h1.4v1.4h-1.4z" fill="#a4a4a4"/></svg>
<div class="abs" style="left:0;top:33px;width:1080px;height:1px;background:#eef5fc"></div>
<div class="abs" style="left:0;top:33px;width:2px;height:508px;background:linear-gradient(90deg,#b2bdca 0,#b2bdca 50%,#e4eaf3 50%,#e4eaf3 100%)"></div>
</body>
</html>
